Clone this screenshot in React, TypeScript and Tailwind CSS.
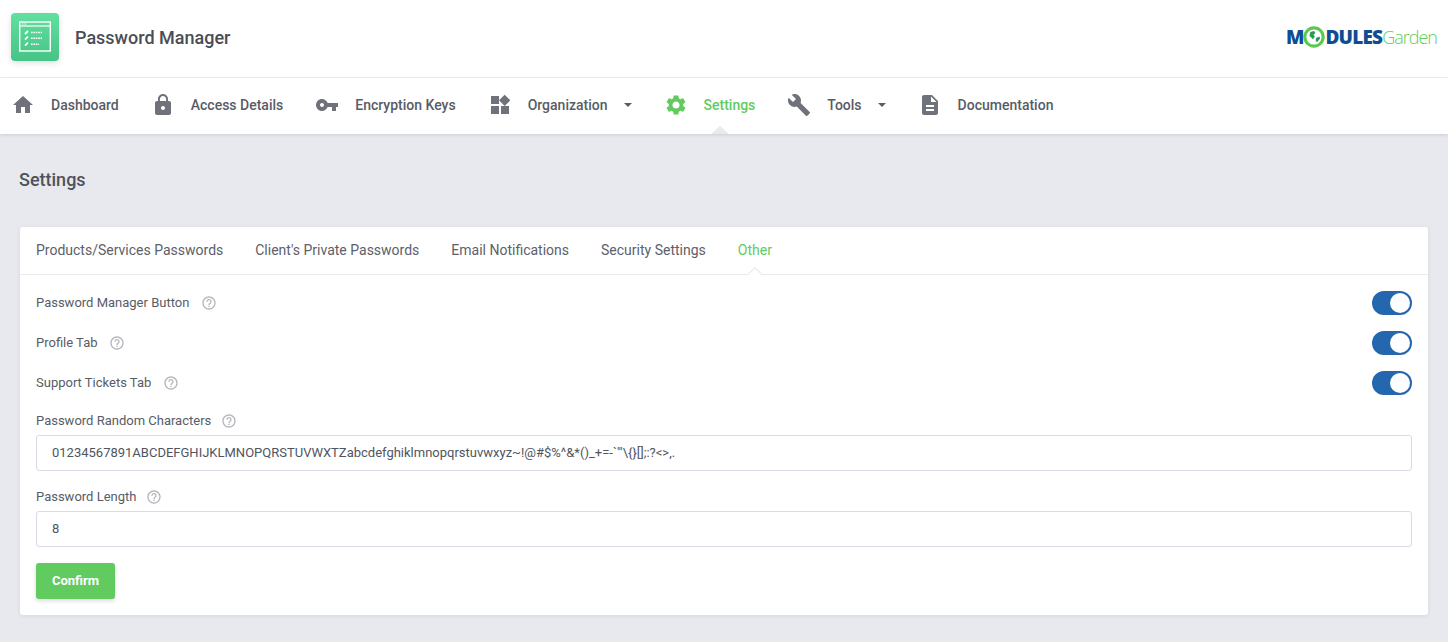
import React from "react";

const ICONS = {
  home: "M10 20v-6h4v6h5v-8h3L12 3 2 12h3v8z",
  lock: "M18 8h-1V6c0-2.76-2.24-5-5-5S7 3.24 7 6v2H6c-1.1 0-2 .9-2 2v10c0 1.1.9 2 2 2h12c1.1 0 2-.9 2-2V10c0-1.1-.9-2-2-2zm-6 9c-1.1 0-2-.9-2-2s.9-2 2-2 2 .9 2 2-.9 2-2 2zm3.1-9H8.9V6c0-1.71 1.39-3.1 3.1-3.1 1.71 0 3.1 1.39 3.1 3.1v2z",
  key: "M12.65 10C11.83 7.67 9.61 6 7 6c-3.31 0-6 2.69-6 6s2.69 6 6 6c2.61 0 4.83-1.67 5.65-4H17v4h4v-4h2v-4H12.65zM7 14c-1.1 0-2-.9-2-2s.9-2 2-2 2 .9 2 2-.9 2-2 2z",
  widgets: "M13 13v8h8v-8h-8zM3 21h8v-8H3v8zM3 3v8h8V3H3zm13.66-1.31L11 7.34 16.66 13l5.66-5.66-5.66-5.65z",
  settings: "M19.14 12.94c.04-.3.06-.61.06-.94 0-.32-.02-.64-.07-.94l2.03-1.58c.18-.14.23-.41.12-.61l-1.92-3.32c-.12-.22-.37-.29-.59-.22l-2.39.96c-.5-.38-1.03-.7-1.62-.94l-.36-2.54c-.04-.24-.24-.41-.48-.41h-3.84c-.24 0-.43.17-.47.41l-.36 2.54c-.59.24-1.13.57-1.62.94l-2.39-.96c-.22-.08-.47 0-.59.22L2.74 8.87c-.12.21-.08.47.12.61l2.03 1.58c-.05.3-.09.63-.09.94s.02.64.07.94l-2.03 1.58c-.18.14-.23.41-.12.61l1.92 3.32c.12.22.37.29.59.22l2.39-.96c.5.38 1.03.7 1.62.94l.36 2.54c.05.24.24.41.48.41h3.84c.24 0 .44-.17.47-.41l.36-2.54c.59-.24 1.13-.56 1.62-.94l2.39.96c.22.08.47 0 .59-.22l1.92-3.32c.12-.22.07-.47-.12-.61l-2.01-1.58zM12 15.6c-1.98 0-3.6-1.62-3.6-3.6s1.62-3.6 3.6-3.6 3.6 1.62 3.6 3.6-1.62 3.6-3.6 3.6z",
  build: "M22.7 19l-9.1-9.1c.9-2.3.4-5-1.5-6.9-2-2-5-2.4-7.4-1.3L9 6 6 9 1.6 4.7C.4 7.1.9 10.1 2.9 12.1c1.9 1.9 4.6 2.4 6.9 1.5l9.1 9.1c.4.4 1 .4 1.4 0l2.3-2.3c.5-.4.5-1.1.1-1.4z",
  doc: "M14 2H6c-1.1 0-1.99.9-1.99 2L4 20c0 1.1.89 2 1.99 2H18c1.1 0 2-.9 2-2V8l-6-6zm2 16H8v-2h8v2zm0-4H8v-2h8v2zm-3-5V3.5L18.5 9H13z",
  help: "M11 18h2v-2h-2v2zm1-16C6.48 2 2 6.48 2 12s4.48 10 10 10 10-4.48 10-10S17.52 2 12 2zm0 18c-4.41 0-8-3.59-8-8s3.59-8 8-8 8 3.59 8 8-3.59 8-8 8zm0-14c-2.21 0-4 1.79-4 4h2c0-1.1.9-2 2-2s2 .9 2 2c0 2-3 1.75-3 5h2c0-2.25 3-2.5 3-5 0-2.21-1.79-4-4-4z",
};

const NAV = [
  { label: "Dashboard", icon: ICONS.home },
  { label: "Access Details", icon: ICONS.lock },
  { label: "Encryption Keys", icon: ICONS.key },
  { label: "Organization", icon: ICONS.widgets, caret: true },
  { label: "Settings", icon: ICONS.settings, active: true },
  { label: "Tools", icon: ICONS.build, caret: true },
  { label: "Documentation", icon: ICONS.doc },
];

const TABS = ["Products/Services Passwords", "Client's Private Passwords", "Email Notifications", "Security Settings", "Other"];

const CHARS = "01234567891ABCDEFGHIJKLMNOPQRSTUVWXTZabcdefghiklmnopqrstuvwxyz~!@#$%^&*()_+=-`'\"\\{}[];:?<>,.";

function Icon({ d, className }: { d: string; className?: string }) {
  return (
    <svg viewBox="0 0 24 24" className={className} fill="currentColor">
      <path d={d} />
    </svg>
  );
}

function Help() {
  return <Icon d={ICONS.help} className="h-4 w-4 text-[#b4b6bd]" />;
}

function Toggle() {
  return (
    <div className="flex h-6 w-10 items-center justify-end rounded-full bg-[#2467ae] pr-0.5">
      <div className="h-5 w-5 rounded-full bg-white" />
    </div>
  );
}

function SwitchRow({ label }: { label: string }) {
  return (
    <div className="flex h-10 items-center justify-between">
      <div className="flex items-center gap-[11.5px]">
        <span>{label}</span>
        <Help />
      </div>
      <Toggle />
    </div>
  );
}

function TextField({ label, value }: { label: string; value: string }) {
  return (
    <div>
      <div className="mb-[5px] flex h-[18px] items-center gap-[9.5px]">
        <span>{label}</span>
        <Help />
      </div>
      <div className="flex h-9 items-center rounded-[3px] border border-[#d9dae8] bg-white px-[15px] text-[#4f5560]">{value}</div>
    </div>
  );
}

function AppLogo() {
  return (
    <div className="flex h-12 w-12 items-center justify-center rounded-[4px] bg-gradient-to-b from-[#62e0a0] to-[#45c486] shadow-[0_2px_6px_rgba(0,0,0,0.12)]">
      <svg viewBox="0 0 32 32" className="h-8 w-8" fill="none" stroke="#fff">
        <rect x="0.7" y="1" width="30.6" height="29" strokeWidth="1.4" />
        <path d="M0.7 5h30.6" strokeWidth="1.2" />
        <path d="M3 3h5" strokeWidth="1" strokeDasharray="1 .6" />
        <path d="M9 10l-3 3M9 15.6l-3 3M9 21.6l-3 3" strokeWidth="1.8" />
        <path d="M12 11.5h11M12 17.2h11M12 23.2h8" strokeWidth="1.6" strokeDasharray="1.6 .8" />
      </svg>
    </div>
  );
}

function GardenLogo() {
  return (
    <div className="flex items-center font-['Open_Sans',sans-serif] leading-none">
      <span className="text-[19px] font-extrabold tracking-[-1px] text-[#0f4c92]">M</span>
      <svg viewBox="0 0 24 24" className="h-[22px] w-[22px]">
        <circle cx="12" cy="12" r="10" fill="#fff" stroke="#5cc84e" strokeWidth="3.4" />
        <path d="M8 6.5l4-1 1.5 2-2 2 1.5 2-2 3-2-2-2-1.5zM14 13l4-1.5.5 2.5-3 3.5-1.5-1z" fill="#2a9a55" />
      </svg>
      <span className="text-[19px] font-extrabold tracking-[-0.8px] text-[#0f4c92]">DULES</span>
      <span className="text-[18px] font-light tracking-[-1px] text-[#66cc5c]">Garden</span>
    </div>
  );
}

export default function App() {
  return (
    <div className="min-h-[642px] bg-[#e8e9ef] font-['Roboto',sans-serif] text-[13px] text-[#585c66]">
      {/* Top header */}
      <div className="flex h-[78px] items-center justify-between border-b border-[#f0f0f3] bg-white pb-[3px] pl-[11px] pr-[11px]">
        <div className="flex items-center gap-4">
          <AppLogo />
          <h1 className="pt-0.5 text-lg font-medium text-[#4a4d55]">Password Manager</h1>
        </div>
        <GardenLogo />
      </div>

      {/* Main nav */}
      <nav className="flex h-[56px] items-center gap-8 bg-white pl-[11px] text-sm font-medium shadow-[0_1px_4px_rgba(0,0,0,0.12)]">
        {NAV.map((item) => (
          <div key={item.label} className={`relative flex h-full items-center gap-4 pb-[2px] ${item.active ? "text-[#62cb60]" : "text-[#585c66]"}`}>
            <Icon d={item.icon} className={`h-6 w-6 ${item.active ? "text-[#62cb60]" : "text-[#6f727b]"}`} />
            <span>{item.label}</span>
            {item.caret && <span className="h-0 w-0 border-x-[4.5px] border-t-[4.5px] border-x-transparent border-t-[#585c66]" />}
            {item.active && (
              <span className="absolute bottom-0 left-[47px] h-0 w-0 border-x-[9px] border-b-[8px] border-x-transparent border-b-[#e8e9ef]" />
            )}
          </div>
        ))}
      </nav>

      <div className="px-5 pb-[27px]">
        <h2 className="ml-[-1px] flex h-[93px] items-center pb-[2px] text-lg font-medium text-[#4f525a]">Settings</h2>

        <div className="rounded-[3px] bg-white shadow-[0_1px_4px_rgba(0,0,0,0.08)]">
          {/* Tabs */}
          <div className="flex h-12 items-center gap-8 border-b border-[#e8e9ef] px-4 text-sm">
            {TABS.map((tab) => (
              <div key={tab} className={`relative flex h-full items-center pb-[2px] ${tab === "Other" ? "text-[#62cb60]" : "text-[#5d6069]"}`}>
                {tab}
                {tab === "Other" && (
                  <span className="absolute bottom-[-5px] left-[12px] h-2.5 w-2.5 rotate-45 border-l border-t border-[#e8e9ef] bg-white" />
                )}
              </div>
            ))}
          </div>

          <div className="relative px-4 pb-4 pt-2">
            <SwitchRow label="Password Manager Button" />
            <SwitchRow label="Profile Tab" />
            <SwitchRow label="Support Tickets Tab" />
            <div className="mb-4 mt-[9px] flex flex-col gap-[17px]">
              <TextField label="Password Random Characters" value={CHARS} />
              <TextField label="Password Length" value="8" />
            </div>
            <button className="h-9 w-[79px] rounded-[3px] bg-[#62cb60] text-[13px] font-bold text-white shadow-[0_2px_4px_rgba(0,0,0,0.15)]">Confirm</button>
          </div>
        </div>
      </div>
    </div>
  );
}
